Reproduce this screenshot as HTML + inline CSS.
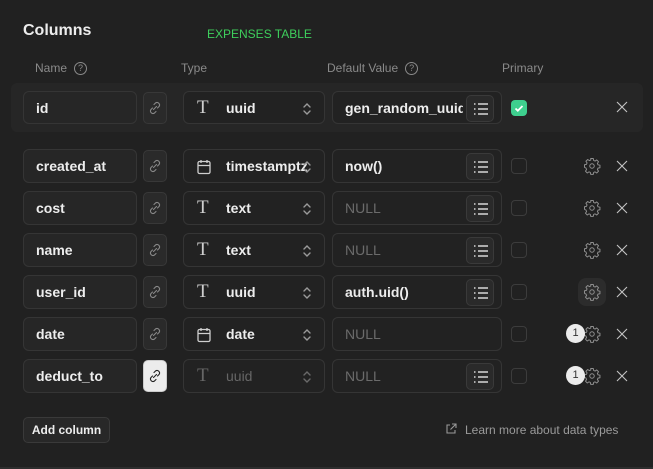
<!DOCTYPE html>
<html><head><meta charset="utf-8"><style>
*{box-sizing:border-box;margin:0;padding:0}
body{width:653px;height:469px;background:#212121;font-family:"Liberation Sans",sans-serif;position:relative;overflow:hidden;color:#ededed}
.a{position:absolute}
.h{font-size:16px;font-weight:bold;color:#ededed;left:23px;top:22px}
.g{color:#3ecf5c;font-size:12px;left:207px;top:27px}
.lbl{font-size:12px;color:#8a8a8a;top:61px;display:flex;align-items:center;height:14px}
.q{display:inline-block;width:13px;height:13px;border:1px solid #8a8a8a;border-radius:50%;font-size:9px;text-align:center;line-height:11px;margin-left:7px}
.hl{left:11px;top:83px;width:632px;height:49px;background:#262626;border-radius:6px}
.in{border:1px solid #353535;background:#262626;border-radius:6px;height:34px;font-size:14px;font-weight:bold;color:#ededed;line-height:32px}
.nm{left:23px;width:114px;padding-left:12px}
.lk{left:143px;width:24px;height:32px;border:1px solid #383838;background:#2a2a2a;border-radius:5px}
.lk svg{position:absolute;left:3px;top:7px}
.lk.w{background:#ececec;border-color:#ccc}
.ty{left:183px;width:142px;padding-left:42px;background:#222}
.ty .ic{position:absolute;left:13px;top:0;font-family:"Liberation Serif",serif;font-weight:normal;font-size:19px;color:#cfcfcf}
.ty .cal{position:absolute;left:13px;top:9px}
.ty .ch{position:absolute;left:118px;top:9px}
.dv{left:332px;width:170px;padding-left:12px;overflow:hidden;white-space:nowrap;background:#222}
.dv .t{display:inline-block;width:118px;overflow:hidden;vertical-align:top}
.nul{color:#6b6b6b;font-weight:normal}
.ls{position:absolute;left:133px;top:3px;width:28px;height:27px;border:1px solid #3a3a3a;border-radius:5px;background:#2a2a2a}
.ls svg{position:absolute;left:6px;top:6px}
.cb{left:511px;width:16px;height:16px;border:1px solid #3c3c3c;border-radius:4px}
.x{left:616px}
.gr{left:583px}
.bad{width:19px;height:19px;border-radius:50%;background:#ececec;color:#333;font-size:11px;text-align:center;line-height:19px;left:566px}
</style></head><body>
<div class="a h">Columns</div>
<div class="a g">EXPENSES TABLE</div>
<div class="a lbl" style="left:35px">Name<span class="q">?</span></div>
<div class="a lbl" style="left:181px">Type</div>
<div class="a lbl" style="left:327px">Default Value<span class="q">?</span></div>
<div class="a lbl" style="left:502px">Primary</div>
<div class="a hl"></div>

<svg width="0" height="0" style="position:absolute"><defs>
<symbol id="lnk" viewBox="0 0 16 16"><path d="M6.5 9.5l3-3M7 4.5l1.5-1.5a2.5 2.5 0 013.5 3.5L10.5 8M9 11.5L7.5 13a2.5 2.5 0 01-3.5-3.5L5.5 8" fill="none" stroke="currentColor" stroke-width="1.1" stroke-linecap="round"/></symbol>
<symbol id="chv" viewBox="0 0 10 16"><path d="M2 6l3-3 3 3M2 10l3 3 3-3" fill="none" stroke="#9a9a9a" stroke-width="1.4" stroke-linecap="round"/></symbol>
<symbol id="lst" viewBox="0 0 16 14"><path d="M5 2h10M5 7h10M5 12h10" stroke="#d8d8d8" stroke-width="1.5"/><path d="M1 2h1.5M1 7h1.5M1 12h1.5" stroke="#d8d8d8" stroke-width="1.5"/></symbol>
<symbol id="cal" viewBox="0 0 14 16"><rect x="1" y="2.5" width="12" height="12" rx="1.5" fill="none" stroke="#cfcfcf" stroke-width="1.3"/><path d="M1 6.5h12M4 1v3M10 1v3" stroke="#cfcfcf" stroke-width="1.3"/></symbol>
<symbol id="gear" viewBox="0 0 24 24"><path d="M10.3 2h3.4l.5 2.6 1.9.8 2.2-1.5 2.4 2.4-1.5 2.2.8 1.9 2.6.5v3.4l-2.6.5-.8 1.9 1.5 2.2-2.4 2.4-2.2-1.5-1.9.8-.5 2.6h-3.4l-.5-2.6-1.9-.8-2.2 1.5-2.4-2.4 1.5-2.2-.8-1.9L2 13.7v-3.4l2.6-.5.8-1.9-1.5-2.2 2.4-2.4 2.2 1.5 1.9-.8z" fill="none" stroke="#8f8f8f" stroke-width="1.3" stroke-linejoin="round"/><circle cx="12" cy="12" r="3" fill="none" stroke="#8f8f8f" stroke-width="1.3"/></symbol>
<symbol id="x" viewBox="0 0 12 12"><path d="M1 1l10 10M11 1L1 11" stroke="#c4c4c4" stroke-width="1.1"/></symbol>
</defs></svg>

<!-- id -->
<div class="a in nm" style="top:91px;height:33px">id</div>
<div class="a lk" style="top:92px;color:#888"><svg width="16" height="16"><use href="#lnk"/></svg></div>
<div class="a in ty" style="top:91px;height:33px"><span class="ic">T</span>uuid<svg class="ch" width="10" height="16"><use href="#chv"/></svg></div>
<div class="a in dv" style="top:91px;height:33px"><span class="t">gen_random_uuid()</span><div class="ls"><svg width="16" height="14"><use href="#lst"/></svg></div></div>
<div class="a" style="left:511px;top:100px;width:16px;height:16px;border-radius:4px;background:#3ecf8e"><svg width="16" height="16"><path d="M4.5 8.5l2.3 2.2L11.5 6" fill="none" stroke="#fff" stroke-width="1.8"/></svg></div>
<svg class="a x" style="top:101px" width="12" height="12"><use href="#x"/></svg>

<!-- created_at -->
<div class="a in nm" style="top:149px">created_at</div>
<div class="a lk" style="top:150px;color:#888"><svg width="16" height="16"><use href="#lnk"/></svg></div>
<div class="a in ty" style="top:149px"><svg class="cal" width="14" height="16"><use href="#cal"/></svg>timestamptz<svg class="ch" width="10" height="16"><use href="#chv"/></svg></div>
<div class="a in dv" style="top:149px">now()<div class="ls"><svg width="16" height="14"><use href="#lst"/></svg></div></div>
<div class="a cb" style="top:158px"></div>
<svg class="a gr" style="top:157px" width="18" height="18"><use href="#gear"/></svg>
<svg class="a x" style="top:160px" width="12" height="12"><use href="#x"/></svg>

<!-- cost -->
<div class="a in nm" style="top:191px">cost</div>
<div class="a lk" style="top:192px;color:#888"><svg width="16" height="16"><use href="#lnk"/></svg></div>
<div class="a in ty" style="top:191px"><span class="ic">T</span>text<svg class="ch" width="10" height="16"><use href="#chv"/></svg></div>
<div class="a in dv" style="top:191px"><span class="nul">NULL</span><div class="ls"><svg width="16" height="14"><use href="#lst"/></svg></div></div>
<div class="a cb" style="top:200px"></div>
<svg class="a gr" style="top:199px" width="18" height="18"><use href="#gear"/></svg>
<svg class="a x" style="top:202px" width="12" height="12"><use href="#x"/></svg>

<!-- name -->
<div class="a in nm" style="top:233px">name</div>
<div class="a lk" style="top:234px;color:#888"><svg width="16" height="16"><use href="#lnk"/></svg></div>
<div class="a in ty" style="top:233px"><span class="ic">T</span>text<svg class="ch" width="10" height="16"><use href="#chv"/></svg></div>
<div class="a in dv" style="top:233px"><span class="nul">NULL</span><div class="ls"><svg width="16" height="14"><use href="#lst"/></svg></div></div>
<div class="a cb" style="top:242px"></div>
<svg class="a gr" style="top:241px" width="18" height="18"><use href="#gear"/></svg>
<svg class="a x" style="top:244px" width="12" height="12"><use href="#x"/></svg>

<!-- user_id -->
<div class="a in nm" style="top:275px">user_id</div>
<div class="a lk" style="top:276px;color:#888"><svg width="16" height="16"><use href="#lnk"/></svg></div>
<div class="a in ty" style="top:275px"><span class="ic">T</span>uuid<svg class="ch" width="10" height="16"><use href="#chv"/></svg></div>
<div class="a in dv" style="top:275px">auth.uid()<div class="ls"><svg width="16" height="14"><use href="#lst"/></svg></div></div>
<div class="a cb" style="top:284px"></div>
<div class="a" style="left:578px;top:278px;width:28px;height:28px;border-radius:8px;background:#2c2c2c"></div>
<svg class="a gr" style="top:283px" width="18" height="18"><use href="#gear"/></svg>
<svg class="a x" style="top:286px" width="12" height="12"><use href="#x"/></svg>

<!-- date -->
<div class="a in nm" style="top:317px">date</div>
<div class="a lk" style="top:318px;color:#888"><svg width="16" height="16"><use href="#lnk"/></svg></div>
<div class="a in ty" style="top:317px"><svg class="cal" width="14" height="16"><use href="#cal"/></svg>date<svg class="ch" width="10" height="16"><use href="#chv"/></svg></div>
<div class="a in dv" style="top:317px"><span class="nul">NULL</span></div>
<div class="a cb" style="top:326px"></div>
<svg class="a gr" style="top:325px" width="18" height="18"><use href="#gear"/></svg>
<div class="a bad" style="top:324px">1</div>
<svg class="a x" style="top:328px" width="12" height="12"><use href="#x"/></svg>

<!-- deduct_to -->
<div class="a in nm" style="top:359px">deduct_to</div>
<div class="a lk w" style="top:360px;color:#222"><svg width="16" height="16"><use href="#lnk"/></svg></div>
<div class="a in ty" style="top:359px;color:#666;font-weight:normal"><span class="ic" style="color:#666">T</span>uuid<svg class="ch" width="10" height="16" style="opacity:.6"><use href="#chv"/></svg></div>
<div class="a in dv" style="top:359px"><span class="nul">NULL</span><div class="ls"><svg width="16" height="14"><use href="#lst"/></svg></div></div>
<div class="a cb" style="top:368px"></div>
<svg class="a gr" style="top:367px" width="18" height="18"><use href="#gear"/></svg>
<div class="a bad" style="top:366px">1</div>
<svg class="a x" style="top:370px" width="12" height="12"><use href="#x"/></svg>

<div class="a" style="left:23px;top:417px;width:87px;height:26px;border:1px solid #3a3a3a;border-radius:5px;background:#282828;font-size:12px;font-weight:bold;color:#ededed;text-align:center;line-height:24px">Add column</div>
<svg class="a" style="left:445px;top:423px" width="12" height="12" viewBox="0 0 12 12"><path d="M5 2H2v8h8V7M7 1h4v4M11 1L5.5 6.5" fill="none" stroke="#999" stroke-width="1.1"/></svg>
<div class="a" style="left:465px;top:423px;font-size:12px;color:#9a9a9a">Learn more about data types</div>
<div class="a" style="left:0;top:467px;width:653px;height:2px;background:#2e2e2e"></div>
</body></html>
